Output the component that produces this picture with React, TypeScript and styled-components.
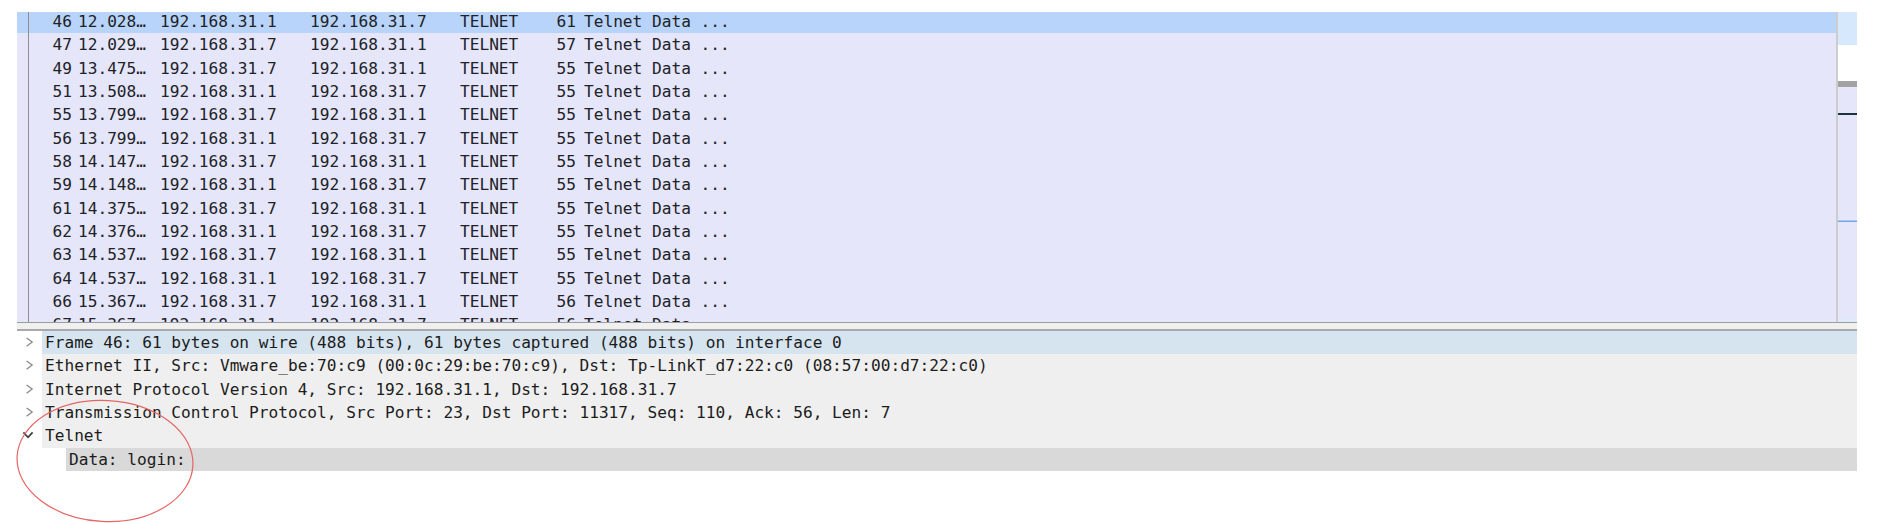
import React from "react";
import styled, { createGlobalStyle } from "styled-components";

const Global = createGlobalStyle`
  html, body { margin: 0; padding: 0; background: #ffffff; }
  body { font-family: "DejaVu Sans Mono", "Liberation Mono", monospace; }
`;

const ROW_H = 23.33;

const Page = styled.div`
  position: relative;
  width: 1886px;
  height: 524px;
  overflow: hidden;
  background: #ffffff;
  display: flex;
  flex-direction: column;
  font-family: "DejaVu Sans Mono", "Liberation Mono", monospace;
  font-size: 16.15px;
  color: #202226;
`;

const TopGap = styled.div`
  height: 12px;
  flex: none;
`;

const PacketPane = styled.div`
  display: flex;
  margin-left: 17px;
  width: 1840px;
  height: 310px;
  flex: none;
`;

const PacketList = styled.div`
  flex: 1;
  overflow: hidden;
  background: #e6e6fb;
`;

const Rows = styled.div`
  margin-top: -2px;
  display: flex;
  flex-direction: column;
`;

const Row = styled.div<{ $selected?: boolean }>`
  display: flex;
  height: ${ROW_H}px;
  line-height: ${ROW_H}px;
  flex: none;
  background: ${(p) => (p.$selected ? "#b9d4fb" : "#e6e6fb")};
  white-space: nowrap;
`;

const Gutter = styled.div`
  width: 11px;
  flex: none;
`;

const Cell = styled.div<{ $w?: number; $right?: boolean; $pl?: number; $pr?: number; $line?: boolean }>`
  box-sizing: border-box;
  ${(p) => (p.$w ? `width: ${p.$w}px; flex: none;` : "flex: 1;")}
  text-align: ${(p) => (p.$right ? "right" : "left")};
  padding-left: ${(p) => p.$pl ?? 0}px;
  padding-right: ${(p) => p.$pr ?? 0}px;
  border-left: ${(p) => (p.$line ? "1px solid #8e8e8e" : "none")};
  overflow: hidden;
`;

const VDivider = styled.div`
  width: 2px;
  flex: none;
  background: #cdcdcd;
`;

const Minimap = styled.svg`
  width: 19px;
  height: 310px;
  flex: none;
  display: block;
`;

const Splitter = styled.div`
  margin-left: 17px;
  width: 1840px;
  height: 6px;
  flex: none;
  background: #f0f0f0;
  border-top: 1px solid #9d9d9d;
  border-bottom: 2px solid #a9a9a9;
`;

const DetailPane = styled.div`
  margin-left: 17px;
  width: 1840px;
  display: flex;
  flex-direction: column;
`;

const DetailRow = styled.div`
  display: flex;
  height: ${ROW_H}px;
  line-height: ${ROW_H}px;
  flex: none;
  white-space: nowrap;
`;

const Twisty = styled.svg`
  width: 25px;
  height: ${ROW_H}px;
  flex: none;
  display: block;
`;

const Label = styled.div<{ $tone: "sel" | "norm" | "child"; $indent?: number }>`
  flex: 1;
  margin-left: ${(p) => p.$indent ?? 0}px;
  padding-left: 3px;
  background: ${(p) =>
    p.$tone === "sel" ? "#d6e4f0" : p.$tone === "child" ? "#d9d9d9" : "#efefef"};
  color: #1c1c1c;
`;

const Annotation = styled.svg`
  position: absolute;
  left: 0;
  top: 0;
  width: 1886px;
  height: 524px;
  pointer-events: none;
`;

type Pkt = [string, string, string, string, string];

const packets: Pkt[] = [
  ["46", "12.028…", "192.168.31.1", "192.168.31.7", "61"],
  ["47", "12.029…", "192.168.31.7", "192.168.31.1", "57"],
  ["49", "13.475…", "192.168.31.7", "192.168.31.1", "55"],
  ["51", "13.508…", "192.168.31.1", "192.168.31.7", "55"],
  ["55", "13.799…", "192.168.31.7", "192.168.31.1", "55"],
  ["56", "13.799…", "192.168.31.1", "192.168.31.7", "55"],
  ["58", "14.147…", "192.168.31.7", "192.168.31.1", "55"],
  ["59", "14.148…", "192.168.31.1", "192.168.31.7", "55"],
  ["61", "14.375…", "192.168.31.7", "192.168.31.1", "55"],
  ["62", "14.376…", "192.168.31.1", "192.168.31.7", "55"],
  ["63", "14.537…", "192.168.31.7", "192.168.31.1", "55"],
  ["64", "14.537…", "192.168.31.1", "192.168.31.7", "55"],
  ["66", "15.367…", "192.168.31.7", "192.168.31.1", "56"],
  ["67", "15.367…", "192.168.31.1", "192.168.31.7", "56"],
];

const ChevronRight = () => (
  <Twisty viewBox={`0 0 25 ${ROW_H}`}>
    <path d="M9.6 6.9 L15.2 11.1 L9.6 15.3" fill="none" stroke="#8a8a8a" strokeWidth="1.3" />
  </Twisty>
);

const ChevronDown = () => (
  <Twisty viewBox={`0 0 25 ${ROW_H}`}>
    <path d="M6.4 8.4 L11 13.4 L15.6 8.4" fill="none" stroke="#3a3a3a" strokeWidth="1.6" />
  </Twisty>
);

const Spacer = () => <Twisty viewBox={`0 0 25 ${ROW_H}`} />;

export default function App() {
  return (
    <>
      <Global />
      <Page>
        <TopGap />
        <PacketPane>
          <PacketList>
            <Rows>
              {packets.map((p, i) => (
                <Row key={p[0]} $selected={i === 0}>
                  <Gutter />
                  <Cell $w={48} $right $pr={4} $line>
                    {p[0]}
                  </Cell>
                  <Cell $w={82} $pl={2}>
                    {p[1]}
                  </Cell>
                  <Cell $w={150} $pl={2}>
                    {p[2]}
                  </Cell>
                  <Cell $w={150} $pl={2}>
                    {p[3]}
                  </Cell>
                  <Cell $w={88} $pl={2}>
                    TELNET
                  </Cell>
                  <Cell $w={34} $right $pr={4}>
                    {p[4]}
                  </Cell>
                  <Cell $pl={4}>Telnet Data ...</Cell>
                </Row>
              ))}
            </Rows>
          </PacketList>
          <VDivider />
          <Minimap viewBox="0 0 19 310">
            <rect x="0" y="0" width="19" height="33" fill="#d6e9fc" />
            <rect x="0" y="33" width="19" height="36" fill="#ffffff" />
            <rect x="0" y="69" width="19" height="6" fill="#a2a2a2" />
            <rect x="0" y="75" width="19" height="232" fill="#e6e6fb" />
            <rect x="0" y="101" width="19" height="2" fill="#1f3340" />
            <rect x="0" y="208.5" width="19" height="1.5" fill="#71a6e6" />
            <rect x="0" y="307" width="19" height="3" fill="#dcecfb" />
          </Minimap>
        </PacketPane>
        <Splitter />
        <DetailPane>
          <DetailRow>
            <ChevronRight />
            <Label $tone="sel">
              Frame 46: 61 bytes on wire (488 bits), 61 bytes captured (488 bits) on interface 0
            </Label>
          </DetailRow>
          <DetailRow>
            <ChevronRight />
            <Label $tone="norm">
              Ethernet II, Src: Vmware_be:70:c9 (00:0c:29:be:70:c9), Dst: Tp-LinkT_d7:22:c0 (08:57:00:d7:22:c0)
            </Label>
          </DetailRow>
          <DetailRow>
            <ChevronRight />
            <Label $tone="norm">Internet Protocol Version 4, Src: 192.168.31.1, Dst: 192.168.31.7</Label>
          </DetailRow>
          <DetailRow>
            <ChevronRight />
            <Label $tone="norm">
              Transmission Control Protocol, Src Port: 23, Dst Port: 11317, Seq: 110, Ack: 56, Len: 7
            </Label>
          </DetailRow>
          <DetailRow>
            <ChevronDown />
            <Label $tone="norm">Telnet</Label>
          </DetailRow>
          <DetailRow>
            <Spacer />
            <Label $tone="child" $indent={24}>
              Data: login:
            </Label>
          </DetailRow>
        </DetailPane>
        <Annotation viewBox="0 0 1886 524">
          <ellipse
            cx="105"
            cy="461"
            rx="88"
            ry="60.5"
            transform="rotate(3 105 461)"
            fill="none"
            stroke="#e66666"
            strokeWidth="1.2"
          />
        </Annotation>
      </Page>
    </>
  );
}
